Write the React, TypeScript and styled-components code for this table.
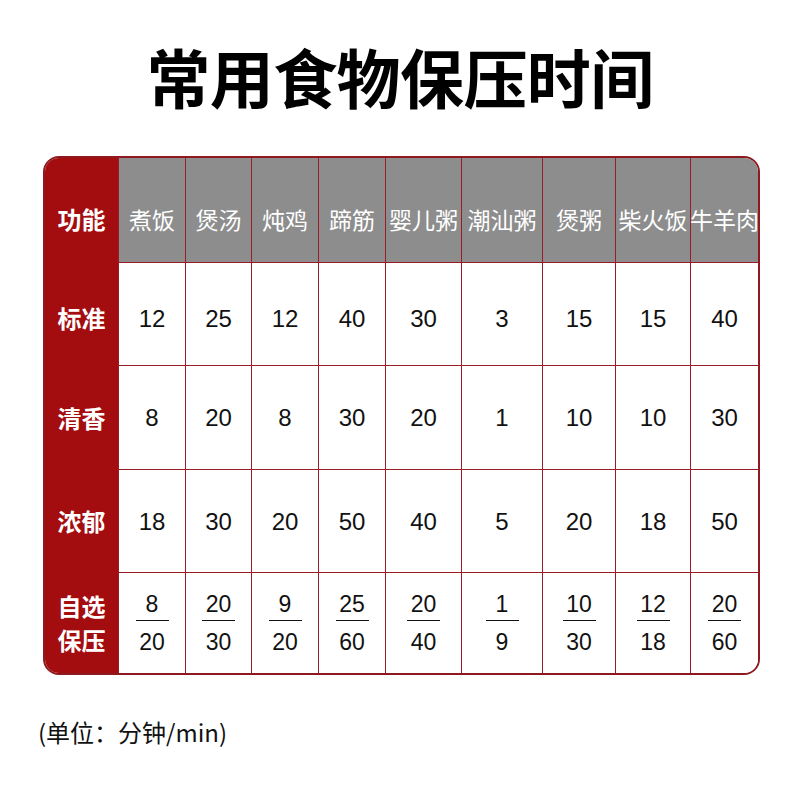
import React from "react";
import styled, { createGlobalStyle } from "styled-components";

const Global = createGlobalStyle`
  html, body { margin: 0; padding: 0; background: #fff; }
  body { font-family: "Noto Sans CJK SC", "Noto Sans", sans-serif; width: 800px; height: 800px; overflow: hidden; }
`;

const Page = styled.div`
  width: 800px;
  height: 800px;
  display: flex;
  flex-direction: column;
  padding-top: 35px;
  box-sizing: border-box;
`;

const Title = styled.h1`
  margin: 0;
  text-align: center;
  font-size: 64px;
  line-height: 80px;
  font-weight: 700;
  color: #000;
  letter-spacing: -0.6px;
`;

const Table = styled.div`
  margin: 41px 0 0 43px;
  width: 717px;
  box-sizing: border-box;
  border: 2px solid #8e1a1f;
  border-radius: 16px;
  overflow: hidden;
  display: grid;
  grid-template-columns: 73px 67px 66px 67px 67px 76px 81px 73px 75px 68px;
  grid-template-rows: 104px 103px 104px 103px 101px;
`;

const rowPad = ["18px", "9px", "1px", "1px", "0"];

const Cell = styled.div<{ $head?: boolean; $col: number; $row: number }>`
  display: flex;
  flex-direction: column;
  align-items: center;
  justify-content: center;
  box-sizing: border-box;
  padding-top: ${(p) => rowPad[p.$row]};
  background: ${(p) => (p.$head ? "#8d8d8d" : "#fff")};
  color: ${(p) => (p.$head ? "#fff" : "#111")};
  border-left: ${(p) => (p.$col > 0 ? "1px solid #9a1c24" : "none")};
  border-top: ${(p) => (p.$row > 0 ? "1px solid #9a1c24" : "none")};
  font-size: ${(p) => (p.$head ? "23px" : "24px")};
  font-family: ${(p) =>
    p.$head ? `"Noto Sans CJK SC", sans-serif` : `"Liberation Sans", Arial, sans-serif`};
  white-space: nowrap;
`;

const Label = styled.div<{ $row: number }>`
  grid-column: 1;
  display: flex;
  align-items: center;
  justify-content: center;
  box-sizing: border-box;
  padding-top: ${(p) => rowPad[p.$row]};
  background: #a30d10;
  color: #fff;
  font-size: 24px;
  font-weight: 700;
  line-height: 34px;
  text-align: center;
`;

const Fraction = styled.div`
  display: flex;
  flex-direction: column;
  align-items: center;
  font-size: 23px;
  line-height: 24px;
`;

const Bar = styled.div`
  width: 33px;
  height: 1.5px;
  background: #111;
  margin: 4px 0 9px;
`;

const Note = styled.div`
  margin: 42px 0 0 38px;
  font-size: 24px;
  color: #111;
  line-height: 30px;
`;

const foods = ["煮饭", "煲汤", "炖鸡", "蹄筋", "婴儿粥", "潮汕粥", "煲粥", "柴火饭", "牛羊肉"];
const rows: { label: string; values: number[] }[] = [
  { label: "标准", values: [12, 25, 12, 40, 30, 3, 15, 15, 40] },
  { label: "清香", values: [8, 20, 8, 30, 20, 1, 10, 10, 30] },
  { label: "浓郁", values: [18, 30, 20, 50, 40, 5, 20, 18, 50] },
];
const custom: [number, number][] = [
  [8, 20], [20, 30], [9, 20], [25, 60], [20, 40], [1, 9], [10, 30], [12, 18], [20, 60],
];

export default function App() {
  return (
    <Page>
      <Global />
      <Title>常用食物保压时间</Title>
      <Table>
        <Label $row={0}>功能</Label>
        {foods.map((f, i) => (
          <Cell key={f} $head $col={i + 1} $row={0}>
            {f}
          </Cell>
        ))}
        {rows.map((r, ri) => (
          <React.Fragment key={r.label}>
            <Label $row={ri + 1}>{r.label}</Label>
            {r.values.map((v, i) => (
              <Cell key={i} $col={i + 1} $row={ri + 1}>
                {v}
              </Cell>
            ))}
          </React.Fragment>
        ))}
        <Label $row={4}>
          自选
          <br />
          保压
        </Label>
        {custom.map(([a, b], i) => (
          <Cell key={i} $col={i + 1} $row={4}>
            <Fraction>
              <span>{a}</span>
              <Bar />
              <span>{b}</span>
            </Fraction>
          </Cell>
        ))}
      </Table>
      <Note>(单位：分钟/min)</Note>
    </Page>
  );
}
